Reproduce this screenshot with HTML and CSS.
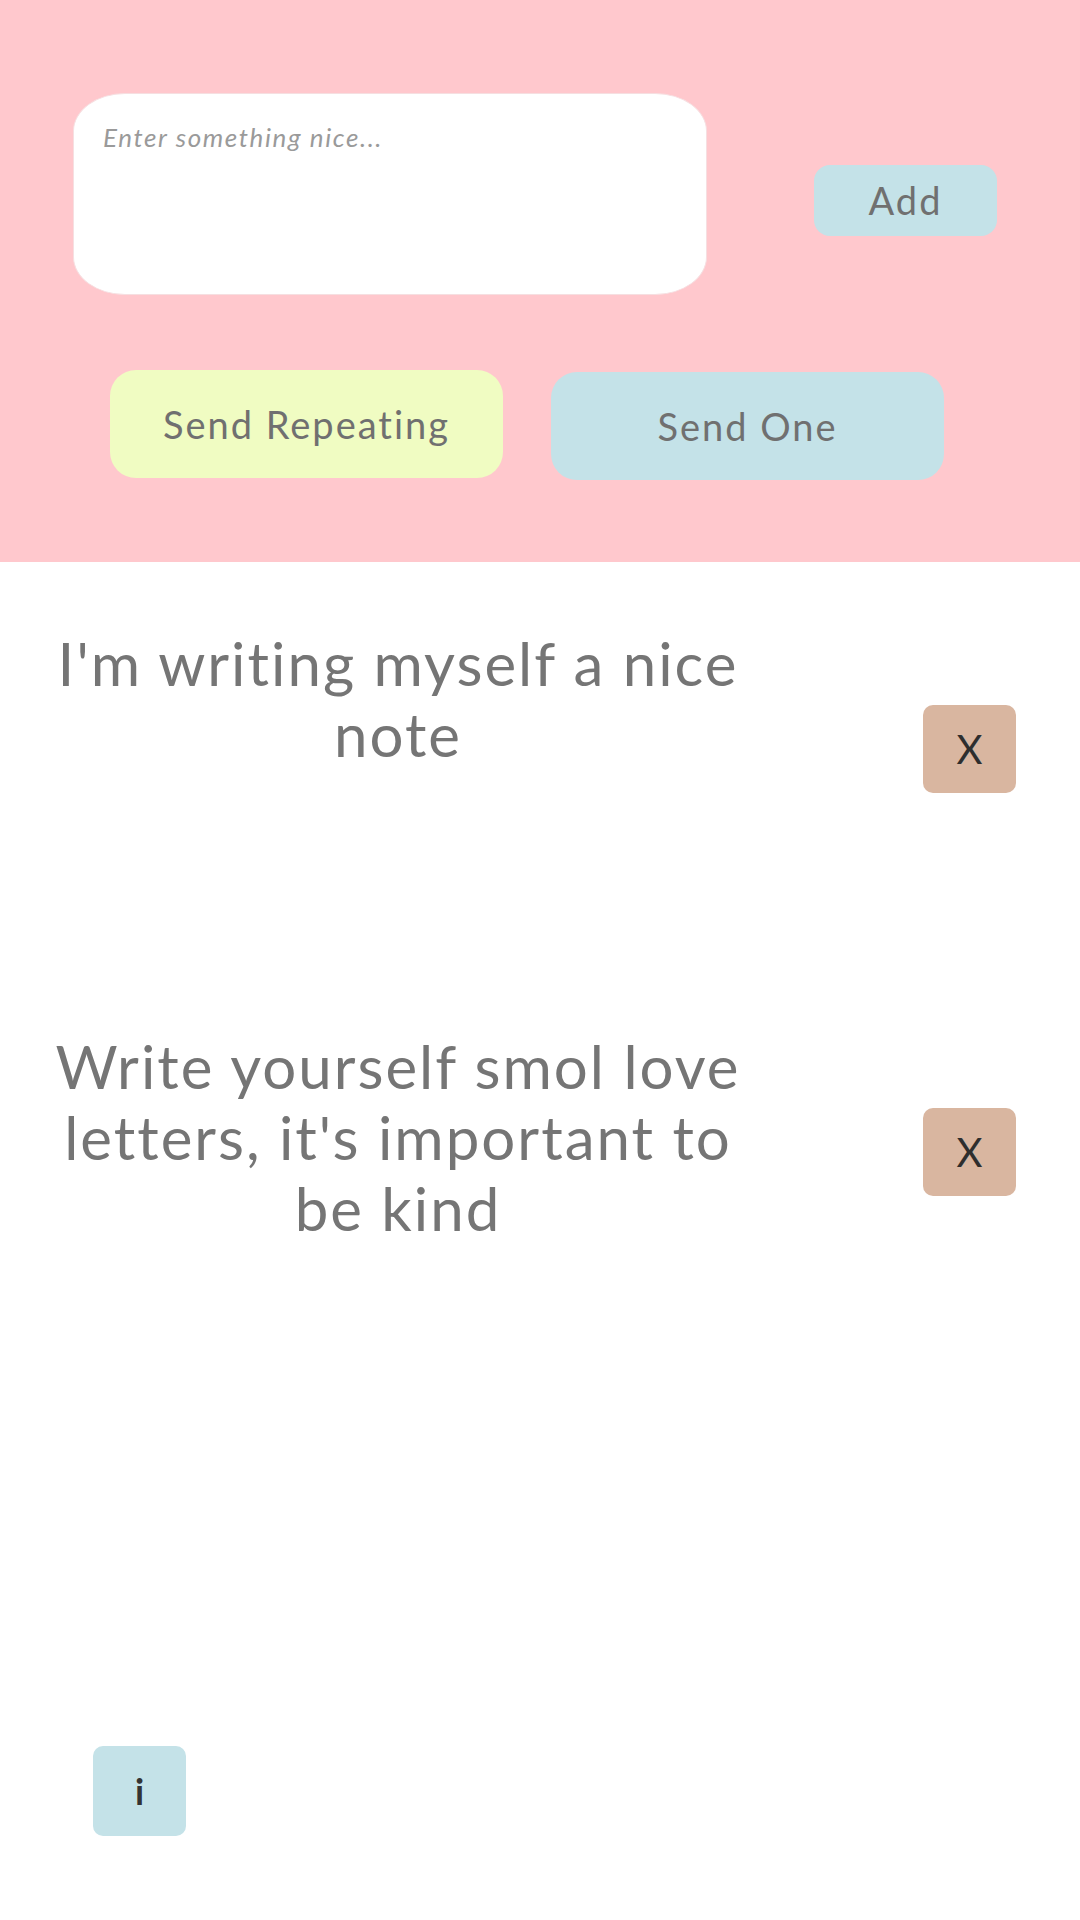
FILE: index.html
```html
<!DOCTYPE html>
<html lang="en">
<head>
<meta charset="utf-8">
<title>Nice notes</title>
<link rel="stylesheet" href="styles.css">
</head>
<body>
<header class="composer">
  <div class="compose-row">
    <textarea class="note-input" placeholder="Enter something nice..."></textarea>
    <button class="btn btn-add">Add</button>
  </div>
  <div class="send-row">
    <button class="btn btn-repeat">Send Repeating</button>
    <button class="btn btn-one">Send One</button>
  </div>
</header>
<main class="notes">
  <div class="note">
    <p class="note-text">I'm writing myself a nice note</p>
    <button class="btn-delete">X</button>
  </div>
  <div class="note">
    <p class="note-text">Write yourself smol love letters, it's important to be kind</p>
    <button class="btn-delete">X</button>
  </div>
</main>
<button class="btn-info">i</button>
</body>
</html>
```
FILE: styles.css
```css
* { box-sizing: border-box; }
html, body { margin: 0; padding: 0; background: #ffffff; }
body {
  width: 1080px;
  height: 1920px;
  font-family: Lato, "Open Sans", sans-serif;
  font-variant-ligatures: none;
}

.composer {
  background: #ffc8cd;
  padding: 93px 0 82px 0;
}
.compose-row {
  display: flex;
  align-items: center;
  padding-left: 73px;
}
.note-input {
  width: 634px;
  height: 202px;
  border: 1px solid #f6dfe1;
  border-radius: 52px / 38px;
  background: #ffffff;
  padding: 27px 29px;
  font-family: Lato, sans-serif;
  font-variant-ligatures: none;
  font-style: italic;
  font-size: 26px;
  letter-spacing: 1.6px;
  color: #777;
  resize: none;
  outline: none;
}
.note-input::placeholder { color: #9a9a9a; font-style: italic; }

.btn {
  border: none;
  font-family: Lato, sans-serif;
  font-variant-ligatures: none;
  letter-spacing: 2px;
  color: #707070;
  cursor: pointer;
}
.btn-add {
  margin-left: 107px;
  margin-top: 12px;
  width: 183px;
  height: 71px;
  border-radius: 16px;
  background: #c4e2e8;
  font-size: 38px;
}
.send-row {
  display: flex;
  gap: 48px;
  padding-left: 110px;
  margin-top: 75px;
}
.btn-repeat, .btn-one {
  width: 393px;
  height: 108px;
  border-radius: 26px;
  font-size: 38px;
}
.btn-repeat { background: #f0fcc2; }
.btn-one { background: #c4e2e8; margin-top: 2px; }

.notes {
  display: flex;
  flex-direction: column;
  gap: 238px;
  padding-top: 66px;
}
.note {
  display: flex;
  align-items: flex-start;
}
.note-text {
  margin: 0 0 0 38px;
  width: 720px;
  text-align: center;
  font-size: 60px;
  line-height: 71px;
  letter-spacing: 2px;
  color: #757575;
}
.btn-delete {
  margin: 77px 0 0 165px;
  width: 93px;
  height: 88px;
  border: none;
  border-radius: 10px;
  background: #d9b6a0;
  color: #2e2e2e;
  font-family: Lato, sans-serif;
  font-weight: 400;
  font-size: 40px;
  padding: 0;
}
.btn-info {
  position: fixed;
  left: 93px;
  bottom: 84px;
  width: 93px;
  height: 90px;
  border: none;
  border-radius: 10px;
  background: #c4e2e8;
  color: #333333;
  font-family: Lato, sans-serif;
  font-weight: 700;
  font-size: 36px;
  padding: 0;
}
```
